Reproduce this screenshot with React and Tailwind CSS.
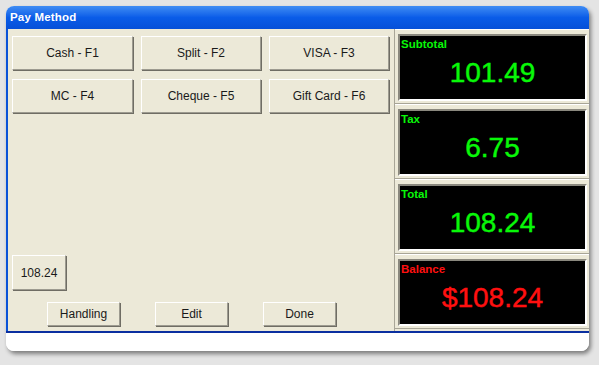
const buttons = ["Cash - F1", "Split - F2", "VISA - F3", "MC - F4", "Cheque - F5", "Gift Card - F6"];

const totals = [
  { label: "Subtotal", value: "101.49", color: "text-[#08f808]" },
  { label: "Tax", value: "6.75", color: "text-[#08f808]" },
  { label: "Total", value: "108.24", color: "text-[#08f808]" },
  { label: "Balance", value: "$108.24", color: "text-[#ff1010]" },
];

const btn =
  "bg-[#ece9d8] border border-t-white border-l-white border-r-[#9d9b90] border-b-[#9d9b90] shadow-[1px_1px_0_0_#6f6d64] text-[12px] text-[#1a1a1a] flex items-center justify-center";

function TotalBox({ label, value, color }) {
  return (
    <div className="h-[75px] border-t border-t-white border-b border-b-[#a8a597] pl-[3px] pr-[2px] pt-[4px] pb-[2px]">
      <div className="h-[67px] border-2 border-t-[#8a887e] border-l-[#8a887e] border-r-white border-b-white bg-black">
        <div className={`${color} text-[11.5px] font-bold leading-[13px] pl-[1px] pt-[2px]`}>{label}</div>
        <div className={`${color} text-[28px] leading-[28px] text-center mt-[8px] [-webkit-text-stroke:0.45px_currentColor]`}>
          {value}
        </div>
      </div>
    </div>
  );
}

export default function App() {
  return (
    <div
      className="w-[599px] h-[365px] bg-[#e4e4e4] pt-[6px] pl-[6px]"
      style={{ fontFamily: '"Liberation Sans", Arial, sans-serif' }}
    >
      <div className="w-[583px] rounded-t-[8px] rounded-b-[8px] bg-white shadow-[2px_3px_4px_rgba(0,0,0,0.45)]">
        {/* Title bar */}
        <div className="h-[23px] rounded-t-[8px] bg-gradient-to-b from-[#3f8cf3] via-[#0a5ce8] to-[#0650d8] flex items-center pl-[4px]">
          <span className="text-white text-[11.5px] font-bold tracking-[0.2px]">Pay Method</span>
        </div>

        {/* Body */}
        <div className="flex h-[302px] bg-[#ece9d8] border-l-2 border-l-[#0a52d8]">
          {/* Left area */}
          <div className="w-[386px] flex flex-col pt-[7px] pl-[4px] pb-[5px]">
            <div className="grid grid-cols-[121px_120px_120px] gap-x-[8px] gap-y-[9px]">
              {buttons.map((b) => (
                <div key={b} className={`${btn} h-[34px]`}>
                  {b}
                </div>
              ))}
            </div>
            <div className="flex-1" />
            <div className={`${btn} w-[54px] h-[35px] text-[11px]`}>108.24</div>
            <div className="flex gap-[35px] pl-[35px] mt-[12px]">
              {["Handling", "Edit", "Done"].map((b) => (
                <div key={b} className={`${btn} w-[73px] h-[24px]`}>
                  {b}
                </div>
              ))}
            </div>
          </div>

          {/* Right column */}
          <div className="flex-1 border-l border-l-[#a8a597] flex flex-col">
            {totals.map((t) => (
              <TotalBox key={t.label} {...t} />
            ))}
          </div>
        </div>

        {/* Bottom strip */}
        <div className="h-[2px] bg-[#0a2fa0]" />
        <div className="h-[18px] bg-white rounded-b-[8px]" />
      </div>
    </div>
  );
}
